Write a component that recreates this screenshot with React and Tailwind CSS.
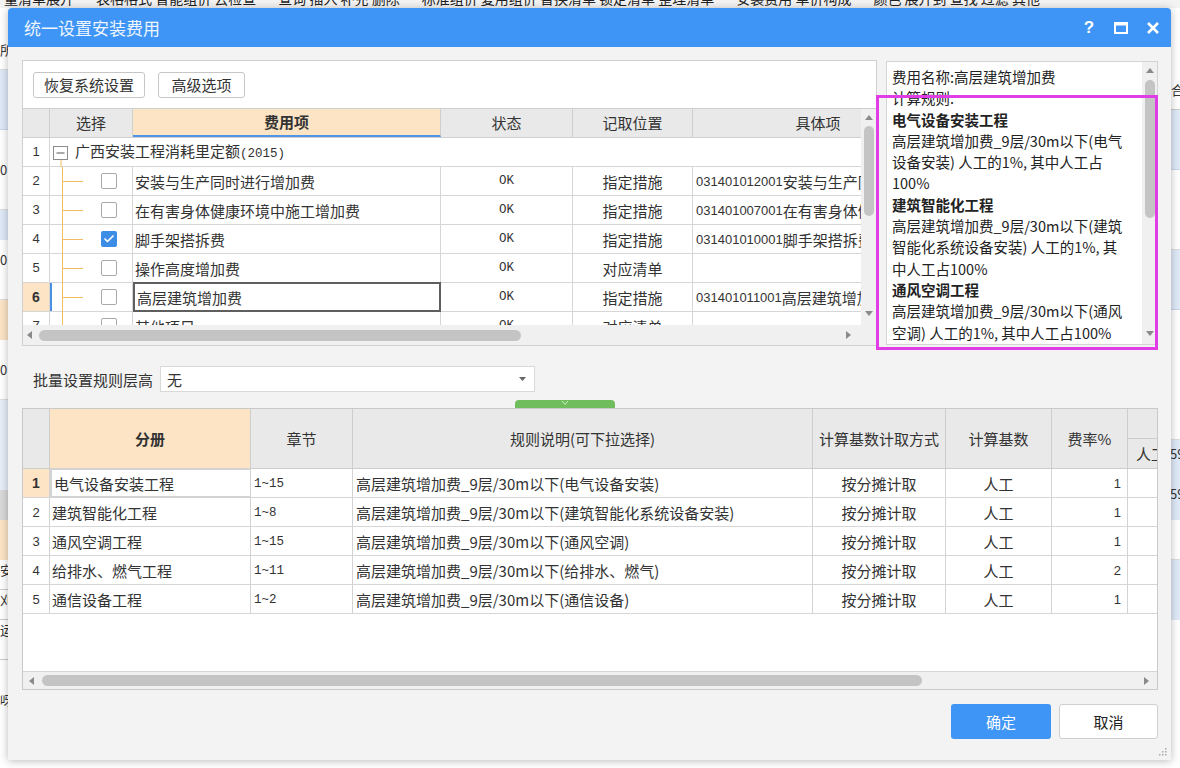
import { Check } from 'lucide-react'

const TOP_ROWS = [
  { n: 2, name: '安装与生产同时进行增加费', pos: '指定措施', code: '031401012001', item: '安装与生产同时进行增加费' },
  { n: 3, name: '在有害身体健康环境中施工增加费', pos: '指定措施', code: '031401007001', item: '在有害身体健康环境中施工增加费' },
  { n: 4, name: '脚手架搭拆费', pos: '指定措施', code: '031401010001', item: '脚手架搭拆费', checked: true },
  { n: 5, name: '操作高度增加费', pos: '对应清单', code: '', item: '' },
  { n: 6, name: '高层建筑增加费', pos: '指定措施', code: '031401011001', item: '高层建筑增加费', active: true },
  { n: 7, name: '其他项目', pos: '对应清单', code: '', item: '' },
]

const RULES = [
  { n: 1, part: '电气设备安装工程', ch: '1~15', desc: '电气设备安装', rate: 1 },
  { n: 2, part: '建筑智能化工程', ch: '1~8', desc: '建筑智能化系统设备安装', rate: 1 },
  { n: 3, part: '通风空调工程', ch: '1~15', desc: '通风空调', rate: 1 },
  { n: 4, part: '给排水、燃气工程', ch: '1~11', desc: '给排水、燃气', rate: 2 },
  { n: 5, part: '通信设备工程', ch: '1~2', desc: '通信设备', rate: 1 },
]

const INFO = [
  { t: '费用名称:高层建筑增加费' },
  { t: '计算规则:' },
  { t: '电气设备安装工程', b: true },
  { t: '高层建筑增加费_9层/30m以下(电气' },
  { t: '设备安装) 人工的1%, 其中人工占' },
  { t: '100%' },
  { t: '建筑智能化工程', b: true },
  { t: '高层建筑增加费_9层/30m以下(建筑' },
  { t: '智能化系统设备安装) 人工的1%, 其' },
  { t: '中人工占100%' },
  { t: '通风空调工程', b: true },
  { t: '高层建筑增加费_9层/30m以下(通风' },
  { t: '空调) 人工的1%, 其中人工占100%' },
]

function Arrow({ dir }) {
  const pts = {
    up: '0,6 4,1 8,6',
    down: '0,1 4,6 8,1',
    left: '6,0 1,4 6,8',
    right: '1,0 6,4 1,8',
  }[dir]
  return (
    <svg width="8" height="8" className="shrink-0">
      <polygon points={pts} fill="#8a8a8a" />
    </svg>
  )
}

function Checkbox({ checked }) {
  if (checked) {
    return (
      <div className="w-[16px] h-[16px] rounded-[2px] bg-[#3b8de6] flex items-center justify-center">
        <Check className="w-[12px] h-[12px] text-white" strokeWidth={3.5} />
      </div>
    )
  }
  return <div className="w-[16px] h-[16px] rounded-[2px] border border-[#a9a9a9] bg-white" />
}

function TreeLines() {
  return (
    <svg width="40" height="29" className="shrink-0">
      <line x1="12.5" y1="0" x2="12.5" y2="29" stroke="#f2bd62" />
      <line x1="13" y1="14.5" x2="33" y2="14.5" stroke="#f2bd62" />
    </svg>
  )
}

function Backdrop() {
  return (
    <div className="w-full h-full flex flex-col bg-white">
      <div className="h-[8px] shrink-0 overflow-hidden bg-[#f3f3f3] flex gap-[22px] pl-[4px] text-[14px] text-[#222] whitespace-nowrap">
        <span className="leading-[14px] -mt-[9px]">量清单展开</span>
        <span className="leading-[14px] -mt-[9px]">表格格式 智能组价 云检查</span>
        <span className="leading-[14px] -mt-[9px]">查询 插入 补充 删除</span>
        <span className="leading-[14px] -mt-[9px]">标准组价 复用组价 替换清单 锁定清单 整理清单</span>
        <span className="leading-[14px] -mt-[9px]">安装费用 单价构成</span>
        <span className="leading-[14px] -mt-[9px]">颜色 展开到 查找 过滤 其他</span>
      </div>
      <div className="flex-1 flex">
        <div className="w-[8px] flex flex-col text-[13px] leading-[20px] text-[#333] overflow-hidden">
          <div className="h-[32px]" />
          <div className="h-[30px] border-b border-[#ddd]">所</div>
          <div className="h-[60px] bg-[#dfe9f7] border-b border-[#c9d7ea]" />
          <div className="h-[80px] border-b border-[#ddd] pt-[30px]">0</div>
          <div className="h-[30px] bg-[#dfe9f7]" />
          <div className="h-[60px] border-b border-[#ddd] pt-[10px]">0</div>
          <div className="h-[40px] bg-[#fde4c6]" />
          <div className="h-[60px] border-b border-[#ddd] pt-[20px]">0</div>
          <div className="h-[90px] bg-[#e7eef8]" />
          <div className="h-[30px] bg-[#d9d9d9]" />
          <div className="h-[40px] bg-[#fde4c6]" />
          <div className="h-[30px] border-b border-[#ccc]">安</div>
          <div className="h-[30px] border-b border-[#ccc]">刈</div>
          <div className="h-[40px] border-b border-[#ccc]">运</div>
          <div className="h-[30px]" />
          <div className="h-[30px]">呀</div>
        </div>
        <div className="flex-1" />
        <div className="w-[9px] flex flex-col text-[13px] leading-[20px] text-[#333] overflow-hidden">
          <div className="h-[72px]" />
          <div className="h-[30px] border-b border-[#ccc]">合</div>
          <div className="h-[60px] bg-[#dfe9f7] border-b border-[#c9d7ea]" />
          <div className="h-[80px] border-b border-[#ddd]" />
          <div className="h-[60px] bg-[#dfe9f7] border-b border-[#c9d7ea]" />
          <div className="h-[130px] border-b border-[#ddd]" />
          <div className="h-[40px] bg-[#dfe9f7] pt-[4px] -ml-[1px]">59</div>
          <div className="h-[40px] bg-[#dfe9f7] pt-[4px] -ml-[1px]">59</div>
          <div className="h-[40px] border-b border-[#ddd]" />
          <div className="h-[60px] bg-[#dfe9f7]" />
        </div>
      </div>
    </div>
  )
}

function TitleBar() {
  return (
    <div className="h-[39px] shrink-0 flex items-center bg-[#3f95f5] rounded-t-[4px] pl-[16px] pr-[2px]">
      <span className="text-[17px] leading-none text-[#eef5ff]">统一设置安装费用</span>
      <div className="ml-auto flex items-center">
        <div className="w-[32px] h-[32px] flex items-center justify-center text-white text-[17px] font-bold font-[family-name:'Liberation_Sans',sans-serif]">?</div>
        <div className="w-[32px] h-[32px] flex items-center justify-center">
          <svg width="14" height="12" viewBox="0 0 14 12">
            <rect x="1" y="1.5" width="12" height="9.5" fill="none" stroke="white" strokeWidth="2" />
            <rect x="0" y="0" width="14" height="3.5" fill="white" />
          </svg>
        </div>
        <div className="w-[32px] h-[32px] flex items-center justify-center">
          <svg width="12" height="12" viewBox="0 0 12 12">
            <path d="M1 1 L11 11 M11 1 L1 11" stroke="white" strokeWidth="2.6" />
          </svg>
        </div>
      </div>
    </div>
  )
}

function TopGrid() {
  const num = "font-[family-name:'Liberation_Sans',sans-serif] text-[13px]"
  return (
    <div className="flex-1 flex flex-col min-h-0">
      <div className="flex-1 flex min-h-0">
        <div className="w-[838px] overflow-hidden flex flex-col">
          {/* header */}
          <div className="h-[29px] shrink-0 flex bg-[#e9e9e9] border-b border-[#cfcfcf] text-[15px] leading-[28px] w-[1000px]">
            <div className="w-[27px] shrink-0 border-r border-[#cfcfcf]" />
            <div className="w-[83px] shrink-0 border-r border-[#cfcfcf] text-center">选择</div>
            <div className="w-[308px] shrink-0 border-r border-[#cfcfcf] text-center font-bold bg-[#fde4c4] border-b-2 border-b-[#4d95e8] leading-[26px]">费用项</div>
            <div className="w-[132px] shrink-0 border-r border-[#cfcfcf] text-center">状态</div>
            <div className="w-[120px] shrink-0 border-r border-[#cfcfcf] text-center">记取位置</div>
            <div className="w-[250px] shrink-0 text-center">具体项</div>
          </div>
          {/* body */}
          <div className="flex-1 overflow-hidden w-[1000px]">
            <div className="h-[29px] flex border-b border-[#d6d6d6]">
              <div className={`w-[27px] shrink-0 border-r border-[#d6d6d6] flex items-center justify-center ${num}`}>1</div>
              <div className="flex-1 flex items-center pl-[3px]">
                <svg width="16" height="29" className="shrink-0">
                  <rect x="0.5" y="8.5" width="14" height="13" fill="white" stroke="#8c8c8c" />
                  <line x1="3.5" y1="15" x2="11.5" y2="15" stroke="#555" />
                  <line x1="8" y1="22" x2="8" y2="29" stroke="#f2bd62" />
                </svg>
                <span className="ml-[6px] text-[15px] leading-none">
                  广西安装工程消耗里定额<span className="font-[family-name:'Liberation_Mono',monospace] text-[12.5px]">(2015)</span>
                </span>
              </div>
            </div>
            {TOP_ROWS.map((r) => (
              <div key={r.n} className="h-[29px] flex border-b border-[#d6d6d6] text-[15px]">
                <div
                  className={[
                    'w-[27px] shrink-0 border-r border-[#d6d6d6] flex items-center justify-center',
                    num,
                    r.active ? 'bg-[#fde4c4] font-bold text-[14px]' : '',
                  ].join(' ')}
                >
                  {r.n}
                </div>
                <div
                  className={[
                    'w-[83px] shrink-0 border-r border-[#d6d6d6] flex items-center',
                    r.active ? 'shadow-[inset_2px_0_0_#4a8fe0]' : '',
                  ].join(' ')}
                >
                  <TreeLines />
                  <div className="ml-[11px]">
                    <Checkbox checked={r.checked} />
                  </div>
                </div>
                <div
                  className={[
                    'w-[308px] shrink-0 flex items-center pl-[2px] leading-none',
                    r.active ? 'border-2 border-[#5f5f5f] -my-[1px]' : 'border-r border-[#d6d6d6]',
                  ].join(' ')}
                >
                  {r.name}
                </div>
                <div className="w-[132px] shrink-0 border-r border-[#d6d6d6] flex items-center justify-center font-[family-name:'Liberation_Mono',monospace] text-[12.5px]">
                  OK
                </div>
                <div className="w-[120px] shrink-0 border-r border-[#d6d6d6] flex items-center justify-center leading-none">
                  {r.pos}
                </div>
                <div className="w-[250px] shrink-0 flex items-center pl-[3px] leading-none whitespace-nowrap">
                  <span className="font-[family-name:'Liberation_Sans',sans-serif] text-[13px]">{r.code}</span>
                  {r.item}
                </div>
              </div>
            ))}
          </div>
        </div>
        {/* vertical scrollbar */}
        <div className="w-[15px] shrink-0 bg-[#f0f0f0] flex flex-col items-center pt-[5px] pb-[7px]">
          <Arrow dir="up" />
          <div className="mt-[4px] w-[10px] h-[90px] rounded-full bg-[#c4c4c4]" />
          <div className="flex-1" />
          <Arrow dir="down" />
        </div>
      </div>
      {/* horizontal scrollbar */}
      <div className="h-[20px] shrink-0 bg-[#f0f0f0] flex items-center">
        <div className="w-[838px] flex items-center pl-[3px] pr-[8px]">
          <Arrow dir="left" />
          <div className="ml-[5px] w-[482px] h-[11px] rounded-full bg-[#c4c4c4]" />
          <div className="flex-1" />
          <Arrow dir="right" />
        </div>
      </div>
    </div>
  )
}

function TopSection() {
  return (
    <div className="relative h-[286px] shrink-0 flex gap-[9px]">
      <div className="w-[855px] shrink-0 border border-[#cfcfcf] bg-white flex flex-col">
        <div className="h-[48px] shrink-0 flex items-center gap-[13px] pl-[10px] border-b border-[#cfcfcf]">
          <button className="w-[112px] h-[26px] border border-[#c6c6c6] rounded-[3px] bg-white text-[15px] leading-none flex items-center justify-center">
            恢复系统设置
          </button>
          <button className="w-[87px] h-[26px] border border-[#c6c6c6] rounded-[3px] bg-white text-[15px] leading-none flex items-center justify-center">
            高级选项
          </button>
        </div>
        <TopGrid />
      </div>
      <div className="flex-1 mt-[1px] mb-[1px] border border-[#d4d4d4] bg-white flex overflow-hidden">
        <div className="flex-1 pl-[5px] pt-[4px] text-[14.5px] leading-[21.3px] text-[#222] whitespace-nowrap overflow-hidden">
          {INFO.map((l, i) => (
            <div key={i} className={l.b ? 'font-bold' : ''}>
              {l.t}
            </div>
          ))}
        </div>
        <div className="w-[15px] shrink-0 bg-[#f0f0f0] flex flex-col items-center pt-[5px] pb-[6px]">
          <Arrow dir="up" />
          <div className="mt-[5px] w-[10px] h-[138px] rounded-full bg-[#c4c4c4]" />
          <div className="flex-1" />
          <Arrow dir="down" />
        </div>
      </div>
      {/* annotation frame */}
      <div className="absolute left-[854px] top-[35px] w-[282px] h-[255px] border-[3px] border-[#e03de6] pointer-events-none" />
    </div>
  )
}

function BatchRow() {
  return (
    <div className="h-[62px] shrink-0 flex flex-col">
      <div className="mt-[20px] h-[26px] flex items-center">
        <span className="ml-[11px] text-[15px] leading-none">批量设置规则层高</span>
        <div className="ml-[7px] w-[375px] h-[26px] border border-[#d9d9d9] bg-white flex items-center pl-[6px] pr-[8px]">
          <span className="text-[15px] leading-none">无</span>
          <svg width="7" height="5" className="ml-auto">
            <polygon points="0,0 7,0 3.5,4" fill="#666" />
          </svg>
        </div>
      </div>
      <div className="mt-[8px] h-[8px] flex">
        <div className="ml-[493px] w-[100px] h-[8px] rounded-t-[4px] bg-[#6fbd5c] flex items-start justify-center">
          <svg width="8" height="6">
            <polyline points="1,1 4,4.5 7,1" fill="none" stroke="#cdeac4" strokeWidth="1" />
          </svg>
        </div>
      </div>
    </div>
  )
}

function BottomGrid() {
  const cell = 'shrink-0 border-r border-[#d3d3d3] flex items-center'
  return (
    <div className="h-[282px] shrink-0 border border-[#c9c9c9] bg-white flex flex-col">
      <div className="flex-1 overflow-hidden">
        <div className="h-[60px] flex bg-[#e9e9e9] border-b border-[#cdcdcd] text-[15px] leading-none">
          <div className="w-[27px] shrink-0 border-r border-[#cdcdcd]" />
          <div className="w-[201px] shrink-0 border-r border-[#cdcdcd] bg-[#fde4c4] flex items-center justify-center font-bold">分册</div>
          <div className="w-[102px] shrink-0 border-r border-[#cdcdcd] flex items-center justify-center">章节</div>
          <div className="w-[460px] shrink-0 border-r border-[#cdcdcd] flex items-center justify-center">规则说明(可下拉选择)</div>
          <div className="w-[133px] shrink-0 border-r border-[#cdcdcd] flex items-center justify-center">计算基数计取方式</div>
          <div className="w-[106px] shrink-0 border-r border-[#cdcdcd] flex items-center justify-center">计算基数</div>
          <div className="w-[76px] shrink-0 border-r border-[#cdcdcd] flex items-center justify-center">费率%</div>
          <div className="flex-1 flex flex-col overflow-hidden">
            <div className="h-[30px] border-b border-[#cdcdcd]" />
            <div className="flex-1 flex items-center pl-[8px] whitespace-nowrap">人工</div>
          </div>
        </div>
        {RULES.map((r) => (
          <div key={r.n} className="h-[29px] flex border-b border-[#d6d6d6] text-[15px] leading-none">
            <div
              className={[
                'w-[27px] justify-center font-[family-name:\'Liberation_Sans\',sans-serif] text-[13px]',
                cell,
                r.n === 1 ? 'bg-[#fde4c4] font-bold text-[14px]' : '',
              ].join(' ')}
            >
              {r.n}
            </div>
            <div
              className={[
                'w-[201px] pl-[2px]',
                cell,
                r.n === 1 ? 'border-2 border-[#7fb0e6] -my-[1px] pl-[1px]' : '',
              ].join(' ')}
            >
              {r.part}
            </div>
            <div className={`w-[102px] pl-[3px] pt-[2px] font-[family-name:'Liberation_Mono',monospace] text-[12.5px] ${cell}`}>{r.ch}</div>
            <div className={`w-[460px] pl-[3px] whitespace-nowrap ${cell}`}>
              高层建筑增加费_9层/30m以下({r.desc})
            </div>
            <div className={`w-[133px] justify-center ${cell}`}>按分摊计取</div>
            <div className={`w-[106px] justify-center ${cell}`}>人工</div>
            <div className={`w-[76px] justify-end pr-[6px] font-[family-name:'Liberation_Sans',sans-serif] text-[13px] ${cell}`}>
              {r.rate}
            </div>
            <div className="flex-1" />
          </div>
        ))}
      </div>
      <div className="h-[18px] shrink-0 bg-[#f0f0f0] border-t border-[#d6d6d6] flex items-center pl-[5px] pr-[6px]">
        <Arrow dir="left" />
        <div className="ml-[6px] w-[880px] h-[11px] rounded-full bg-[#c4c4c4]" />
        <div className="flex-1" />
        <Arrow dir="right" />
      </div>
    </div>
  )
}

export default function App() {
  return (
    <div className="relative w-[1180px] h-[768px] overflow-hidden bg-white font-[family-name:'Noto_Sans_CJK_SC',sans-serif] text-[#333]">
      <Backdrop />
      <div className="absolute left-[8px] top-[8px] w-[1163px] h-[752px] flex flex-col bg-[#f3f3f3] rounded-t-[4px] shadow-[0_1px_8px_rgba(0,0,0,0.28)]">
        <TitleBar />
        <div className="flex-1 flex flex-col pl-[14px] pr-[13px] pt-[13px]">
          <TopSection />
          <BatchRow />
          <BottomGrid />
          <div className="mt-[14px] flex justify-end gap-[8px]">
            <button className="w-[100px] h-[35px] rounded-[3px] bg-[#3f95f5] text-white text-[15px] leading-none">确定</button>
            <button className="w-[99px] h-[35px] rounded-[3px] border border-[#cfcfcf] bg-white text-[15px] leading-none text-[#222]">取消</button>
          </div>
        </div>
        <svg width="8" height="8" className="absolute right-[4px] bottom-[4px]">
          <rect x="6" y="0" width="1.5" height="1.5" fill="#aaa" />
          <rect x="3" y="3" width="1.5" height="1.5" fill="#aaa" />
          <rect x="6" y="3" width="1.5" height="1.5" fill="#aaa" />
          <rect x="0" y="6" width="1.5" height="1.5" fill="#aaa" />
          <rect x="3" y="6" width="1.5" height="1.5" fill="#aaa" />
          <rect x="6" y="6" width="1.5" height="1.5" fill="#aaa" />
        </svg>
      </div>
    </div>
  )
}
